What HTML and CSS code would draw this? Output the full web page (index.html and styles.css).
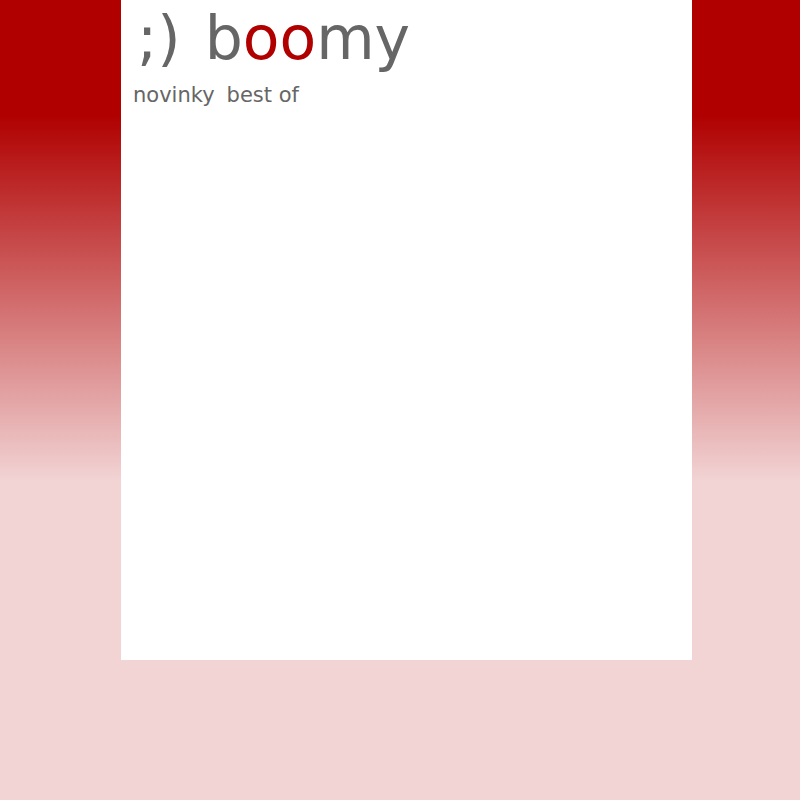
FILE: index.html
```html
<!DOCTYPE html>
<html lang="cs">
<head>
<meta charset="utf-8">
<title>;) boomy</title>
<link rel="stylesheet" href="styles.css">
</head>
<body>
<div class="page">
  <header class="header">
    <h1 class="logo"><span class="smiley">;)</span> <span class="name">b<span class="accent">oo</span>my</span></h1>
    <nav class="menu">
      <a href="#novinky">novinky</a>
      <a href="#best-of">best of</a>
    </nav>
  </header>
</div>
</body>
</html>
```
FILE: styles.css
```css
body {
  margin: 0;
  min-height: 100vh;
  color: #666;
  font-family: Verdana, "DejaVu Sans", sans-serif;
  background: #f2d4d5 linear-gradient(#b00000 0, #b00000 115px, #f2d4d5 482px) no-repeat;
}

.page {
  box-sizing: border-box;
  width: 71.4%;
  min-height: 660px;
  margin-left: 121px;
  padding: 0 12px;
  background: #fff;
}

.logo {
  display: flex;
  margin: 0;
  font-size: 60px;
  line-height: 76px;
  font-weight: normal;
}

.smiley {
  padding: 0 24px 0 4px;
}

.accent {
  color: #b00000;
}

.menu {
  display: flex;
  gap: 12px;
  font-size: 21px;
  line-height: 38px;
}

.menu a {
  color: inherit;
  text-decoration: none;
}
```
